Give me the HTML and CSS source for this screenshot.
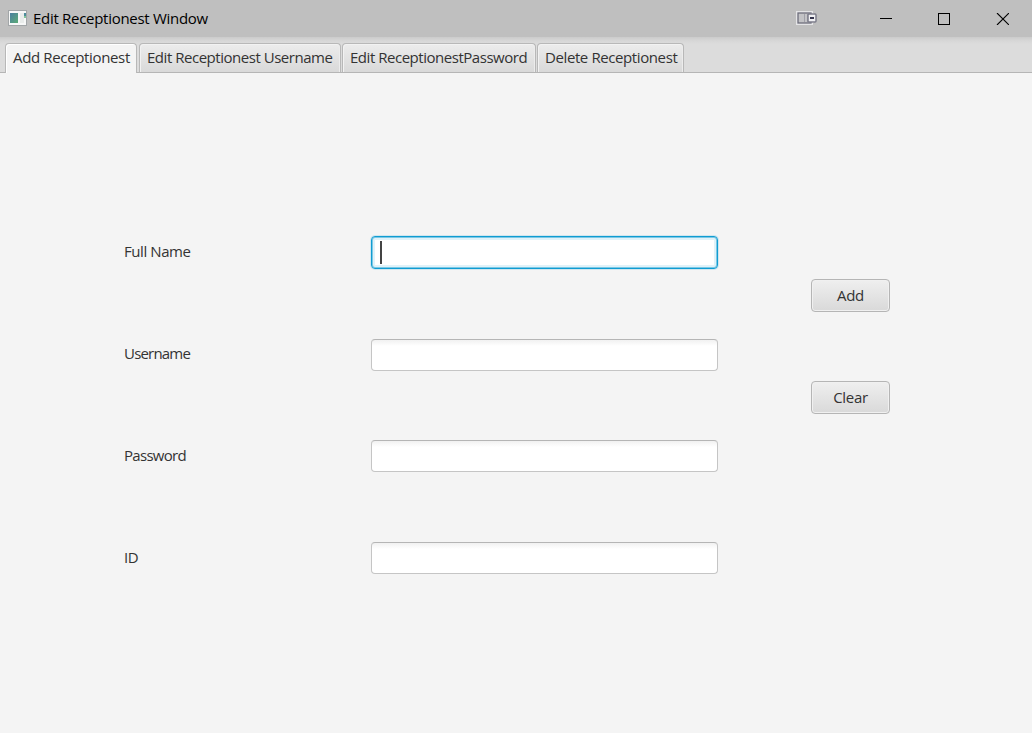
FILE: index.html
```html
<!DOCTYPE html>
<html lang="en">
<head>
<meta charset="utf-8">
<title>Edit Receptionest Window</title>
<link rel="stylesheet" href="styles.css">
</head>
<body>
<div class="window">
  <header class="titlebar">
    <svg class="app-icon" width="19" height="16" viewBox="0 0 19 16">
      <defs><linearGradient id="pane" x1="0" y1="0" x2="1" y2="1"><stop offset="0" stop-color="#4a7fa0"/><stop offset="1" stop-color="#5cab76"/></linearGradient></defs>
      <rect x=".5" y=".5" width="18" height="15" fill="#f7f8f8" stroke="#a2a6a8"/>
      <rect x="2" y="3" width="8" height="10" fill="url(#pane)"/>
      <rect x="12" y="3" width="4" height="10" fill="#e9eceb"/>
      <rect x="16" y="3" width="2" height="3" fill="#4c8c9c"/><rect x="16" y="6" width="2" height="2" fill="#83c69c"/>
    </svg>
    <h1 class="title">Edit Receptionest Window</h1>
    <svg class="device-icon" width="22" height="14" viewBox="0 0 22 14">
      <path d="M0 0H17V2H18V12H17V14H0Z" fill="#e4e4e6"/>
      <rect x="2" y="2" width="13" height="10" fill="#c3c3c6" stroke="#6d6d7c" stroke-width="1.300"/>
      <path d="M8.500 3V11M11.500 3V11" stroke="#a0a0a8"/>
      <rect x="12" y="3" width="8" height="8" rx="1" fill="#f1f1f4" stroke="#7d7d8b" stroke-width="1.500"/>
      <rect x="14" y="6" width="4" height="2" fill="#34344c"/>
    </svg>
    <svg class="controls" width="129" height="12" viewBox="0 0 129 12" fill="none" stroke="#000">
      <path d="M0 5.500H12"/><rect x="58.500" y=".5" width="11" height="11"/><path d="M117 0L129 12M129 0L117 12" stroke-width="1.100"/>
    </svg>
  </header>
  <nav class="tabs">
    <div class="tab selected">Add Receptionest</div>
    <div class="tab tab-username">Edit Receptionest Username</div>
    <div class="tab tab-password">Edit ReceptionestPassword</div>
    <div class="tab tab-delete">Delete Receptionest</div>
  </nav>
  <main class="content">
    <form class="fields">
      <label class="row"><span class="label">Full Name</span><span class="input focused"><span class="caret"></span></span></label>
      <label class="row row-user"><span class="label label-user">Username</span><span class="input"></span></label>
      <label class="row"><span class="label label-low label-password">Password</span><span class="input"></span></label>
      <label class="row"><span class="label label-low">ID</span><span class="input"></span></label>
    </form>
    <div class="actions">
      <button class="button" type="button">Add</button>
      <button class="button" type="button">Clear</button>
    </div>
  </main>
</div>
</body>
</html>
```
FILE: styles.css
```css
* { box-sizing: border-box; }
body { margin: 0; background: #f4f4f4; color: #333; font: 15px/20px "Open Sans", "Noto Sans", sans-serif; }
.window { width: 1032px; height: 733px; overflow: hidden; display: flex; flex-direction: column; }
.titlebar { height: 37px; background: #bfbfbf; display: flex; align-items: center; padding-left: 8px; flex: none; }
.app-icon { flex: none; margin-bottom: 1px; }
.title { margin: 0 0 2px 6px; font-size: 15px; font-weight: 400; color: #000; width: 763px; letter-spacing: -.29px; }
.device-icon { flex: none; margin-bottom: 1px; }
.controls { flex: none; margin-left: 62px; }
.tabs { height: 36px; flex: none; display: flex; padding: 6px 0 0 5px; border-bottom: 1px solid #b5b5b5; background: linear-gradient(#cbcbcb 0, #d5d5d5 3px, #dcdcdc 7px, #dcdcdc); }
.tab { height: 29px; border: 1px solid #b8b8b8; border-bottom: 0; border-radius: 4px 4px 0 0; background: linear-gradient(#ececec, #d9d9d9); box-shadow: inset 1px 1px #f2f2f2, inset -1px 0 #ececec; padding: 3px 0 0 7px; margin-right: 1px; white-space: nowrap; }
.tab.selected { width: 132px; height: 30px; background: #f4f4f4; box-shadow: inset 1px 1px #fff; margin-right: 2px; letter-spacing: -.35px; }
.tab-username { width: 202px; letter-spacing: -.47px; }
.tab-password { width: 194px; letter-spacing: -.47px; }
.tab-delete { width: 147px; letter-spacing: -.4px; }
.content { flex: 1; display: flex; align-items: flex-start; padding: 163px 0 0 124px; }
.fields { width: 595px; }
.row { display: flex; height: 102px; }
.row-user { height: 101px; }
.label { width: 247px; padding-top: 5px; letter-spacing: -.42px; }
.label-user { letter-spacing: -.8px; }
.label-password { letter-spacing: -.7px; }
.label-low { padding-top: 6px; }
.input { width: 347px; height: 32px; margin-top: 1px; border: 1px solid #c5c5c5; border-top-color: #b5b5b5; border-radius: 4px; background: linear-gradient(#f1f1f1, #fff 6px); }
.focused { height: 33px; margin-top: 0; border: 1px solid #0f9cd2; box-shadow: 0 0 0 1px #d0e6ef, inset 0 0 0 1px #7cc8e5, inset 0 0 0 3px #e0f2f9; background: #fff; padding: 4px 0 0 8px; }
.caret { display: block; width: 1.500px; height: 23px; background: #444; }
.actions { margin: 43px 0 0 92px; display: flex; flex-direction: column; gap: 69px; }
.button { width: 79px; height: 33px; padding: 0 0 2px; border: 1px solid #b5b5b5; border-radius: 4px; background: linear-gradient(#efefef, #d9d9d9); box-shadow: inset 0 0 0 1px #f0f0f0; color: #333; font: inherit; letter-spacing: -.3px; }
```
